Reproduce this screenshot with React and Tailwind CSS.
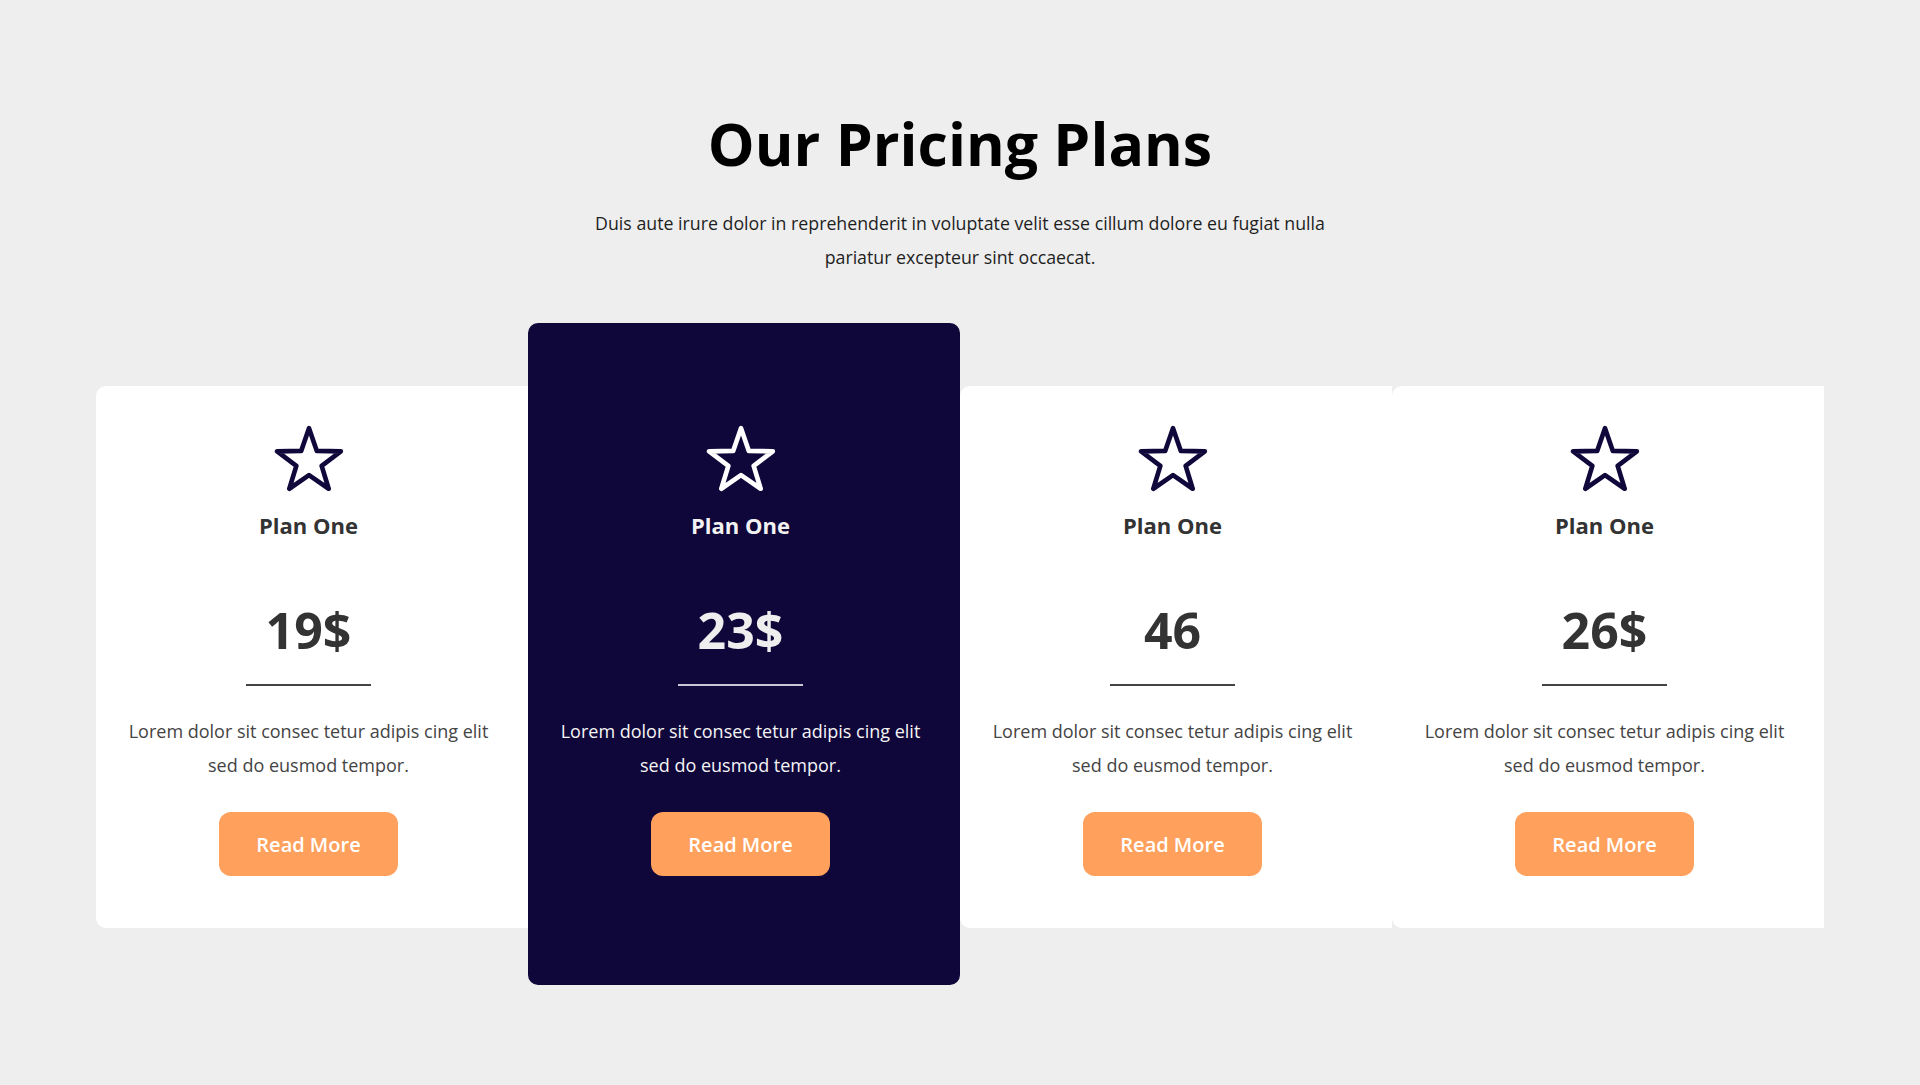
import React from "react";

function Star({ color }) {
  return (
    <svg width="72" height="67" viewBox="0 0 100 92" fill="none" className="block">
      <polygon
        points="50,4 60.87,35.53 94.2,35.98 67.59,56.22 77.33,88.02 50,69 22.67,88.02 32.41,56.22 5.8,35.98 39.13,35.53"
        stroke={color}
        strokeWidth="6.5"
        strokeLinejoin="round"
      />
    </svg>
  );
}

function Card({ price, dark }) {
  const wrap = dark
    ? "w-[432px] shrink-0 rounded-[10px] bg-[#0f063a] pt-[102px] pb-[109px]"
    : "mt-[63px] w-[432px] shrink-0 rounded-l-[10px] bg-white pt-[39px] pb-[52px]";
  return (
    <div className={wrap + " flex flex-col items-center pr-[7px] text-center"}>
      <Star color={dark ? "#ffffff" : "#10073a"} />
      <div
        className={
          "mt-[18px] text-[22px] font-bold leading-[30px] " +
          (dark ? "text-[#f2f2f2]" : "text-[#333333]")
        }
      >
        Plan One
      </div>
      <div
        className={
          "mt-[60px] text-[50px] font-bold leading-[60px] " +
          (dark ? "text-[#eeeeee]" : "text-[#333333]")
        }
      >
        {price}
      </div>
      <div
        className={
          "mt-[24px] h-[1.5px] w-[125px] " + (dark ? "bg-[#c9c6d6]" : "bg-[#444444]")
        }
      />
      <p
        className={
          "mt-[28px] w-[380px] text-[18px] leading-[34px] " +
          (dark ? "text-[#f5f5f5]" : "text-[#444444]")
        }
      >
        Lorem dolor sit consec tetur adipis cing elit sed do eusmod tempor.
      </p>
      <button className="mt-[30px] flex h-[64px] w-[179px] items-center justify-center rounded-[12px] bg-[#ffa05c] pt-[3px] text-[20px] font-semibold text-white">
        Read More
      </button>
    </div>
  );
}

export default function App() {
  return (
    <div className="min-h-[1085px] w-full bg-[#eeeeee] font-['Open_Sans',sans-serif]">
      <div className="pt-[107px] text-center">
        <h1 className="text-[59px] font-bold leading-[72px] text-black">Our Pricing Plans</h1>
        <p className="mx-auto mt-[27px] w-[780px] text-[17.75px] leading-[34px] text-[#1e1e1e]">
          Duis aute irure dolor in reprehenderit in voluptate velit esse cillum dolore eu fugiat nulla
          pariatur excepteur sint occaecat.
        </p>
      </div>
      <div className="mx-auto mt-[49px] flex w-[1728px] items-start">
        <Card price="19$" />
        <Card price="23$" dark />
        <Card price="46" />
        <Card price="26$" />
      </div>
    </div>
  );
}
